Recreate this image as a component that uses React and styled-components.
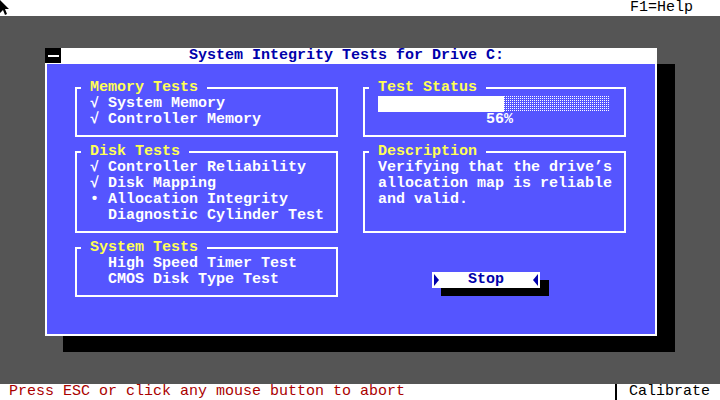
import React from "react";
import styled, { createGlobalStyle } from "styled-components";

const Global = createGlobalStyle`
  html, body { margin: 0; padding: 0; background: #555555; }
  #root { width: 720px; height: 400px; }
`;

const Screen = styled.div`
  width: 720px;
  height: 400px;
  display: flex;
  flex-direction: column;
  background: #555555;
  font-family: "Liberation Mono", "DejaVu Sans Mono", monospace;
  font-size: 15px;
  line-height: 16px;
  overflow: hidden;
`;

const Bar = styled.div`
  height: 16px;
  flex: 0 0 16px;
  background: #ffffff;
  display: flex;
  align-items: flex-start;
  justify-content: space-between;
  color: ${p => p.$color || "#000"};
`;

const TopBar = styled(Bar)`
  padding-right: 27px;
`;

const BottomBar = styled(Bar)`
  padding-left: 9px;
  padding-right: 0;
`;

const Cursor = styled.svg`
  display: block;
  width: 10px;
  height: 16px;
`;

const BarText = styled.span`
  white-space: pre;
  color: ${p => p.$color || "#000"};
`;

const StatusRight = styled.div`
  display: flex;
  align-items: stretch;
  height: 16px;
  width: 108px;
`;

const Separator = styled.div`
  width: 2px;
  height: 16px;
  background: #000;
  margin: 0 12px 0 3px;
`;

const Desktop = styled.div`
  flex: 1;
  padding: 32px 0 0 45px;
`;

const Window = styled.div`
  width: 612px;
  height: 288px;
  background: #ffffff;
  box-shadow: 18px 16px 0 #000000;
  display: flex;
  flex-direction: column;
`;

const TitleBar = styled.div`
  height: 16px;
  flex: 0 0 16px;
  display: flex;
  align-items: flex-start;
`;

const CloseBox = styled.div`
  width: 16px;
  height: 15px;
  background: #000;
  display: flex;
  align-items: center;
  justify-content: center;
  &::before {
    content: "";
    width: 11px;
    height: 2px;
    background: #fff;
  }
`;

const Title = styled.div`
  margin-left: 128px;
  color: #0000aa;
  font-weight: bold;
  white-space: pre;
`;

const Body = styled.div`
  flex: 1;
  margin: 0 2px 2px;
  background: #5555ff;
  display: grid;
  grid-template-columns: 263px 263px;
  column-gap: 25px;
  align-content: start;
  padding: 23px 0 0 28px;
`;

const Column = styled.div`
  display: flex;
  flex-direction: column;
  gap: 14px;
`;

const Group = styled.div`
  position: relative;
  box-sizing: border-box;
  height: ${p => p.$rows * 16 + 18}px;
  border: 2px solid #ffffff;
  padding: 7px 0 7px 13px;
  color: #ffffff;
  font-weight: bold;
`;

const Legend = styled.span`
  position: absolute;
  top: -9px;
  left: 4px;
  padding: 0 9px;
  background: #5555ff;
  color: #ffff55;
  white-space: pre;
`;

const Item = styled.div`
  display: flex;
  height: 16px;
  white-space: pre;
`;

const Mark = styled.span`
  width: 18px;
  flex: 0 0 18px;
`;

const Progress = styled.div`
  display: flex;
  height: 16px;
`;

const Filled = styled.div`
  background: #ffffff;
  height: 16px;
`;

const Shade = styled.div`
  height: 16px;
  background-color: #ffffff;
  background-image:
    linear-gradient(to right, transparent 1px, #5555ff 1px),
    linear-gradient(to bottom, transparent 1px, #5555ff 1px);
  background-size: 2px 2px, 2px 2px;
`;

const Percent = styled.div`
  height: 16px;
  padding-left: 108px;
  white-space: pre;
`;

const ButtonWrap = styled.div`
  margin: 25px 0 0 69px;
`;

const Button = styled.div`
  width: 108px;
  height: 16px;
  background: #ffffff;
  box-shadow: 9px 8px 0 #000000;
  display: flex;
  align-items: center;
  justify-content: space-between;
  color: #0000aa;
  font-weight: bold;
`;

const Arrow = styled.svg`
  display: block;
  width: 7px;
  height: 14px;
  margin: 0 ${p => (p.$side === "left" ? "0 0 1px" : "1px 0 0")};
`;

const memory = [
  ["√", "System Memory"],
  ["√", "Controller Memory"],
];

const disk = [
  ["√", "Controller Reliability"],
  ["√", "Disk Mapping"],
  ["•", "Allocation Integrity"],
  ["", "Diagnostic Cylinder Test"],
];

const system = [
  ["", "High Speed Timer Test"],
  ["", "CMOS Disk Type Test"],
];

function TestGroup({ label, items }) {
  return (
    <Group $rows={items.length}>
      <Legend>{label}</Legend>
      {items.map(([m, t]) => (
        <Item key={t}>
          <Mark>{m}</Mark>
          {t}
        </Item>
      ))}
    </Group>
  );
}

export default function App() {
  const pct = 56;
  const cells = 26;
  const filled = 14;
  return (
    <>
      <Global />
      <Screen>
        <TopBar>
          <Cursor viewBox="0 0 10 16">
            <path d="M0 0 L0 13 L3 10 L5 15 L7 14 L5 9 L9 9 Z" fill="#000" />
          </Cursor>
          <BarText>F1=Help</BarText>
        </TopBar>
        <Desktop>
          <Window>
            <TitleBar>
              <CloseBox />
              <Title>System Integrity Tests for Drive C:</Title>
            </TitleBar>
            <Body>
              <Column>
                <TestGroup label="Memory Tests" items={memory} />
                <TestGroup label="Disk Tests" items={disk} />
                <TestGroup label="System Tests" items={system} />
              </Column>
              <Column>
                <Group $rows={2}>
                  <Legend>Test Status</Legend>
                  <Progress>
                    <Filled style={{ width: filled * 9 }} />
                    <Shade style={{ width: (cells - filled) * 9 - 2 }} />
                  </Progress>
                  <Percent>{pct}%</Percent>
                </Group>
                <Group $rows={4}>
                  <Legend>Description</Legend>
                  <Item>Verifying that the drive’s</Item>
                  <Item>allocation map is reliable</Item>
                  <Item>and valid.</Item>
                </Group>
                <ButtonWrap>
                  <Button>
                    <Arrow $side="left" viewBox="0 0 7 14">
                      <path d="M1 1 L6 7 L1 13 Z" fill="#0000aa" />
                    </Arrow>
                    <span>Stop</span>
                    <Arrow $side="right" viewBox="0 0 7 14">
                      <path d="M6 1 L1 7 L6 13 Z" fill="#0000aa" />
                    </Arrow>
                  </Button>
                </ButtonWrap>
              </Column>
            </Body>
          </Window>
        </Desktop>
        <BottomBar>
          <BarText $color="#aa0000">Press ESC or click any mouse button to abort</BarText>
          <StatusRight>
            <Separator />
            <BarText>Calibrate</BarText>
          </StatusRight>
        </BottomBar>
      </Screen>
    </>
  );
}
